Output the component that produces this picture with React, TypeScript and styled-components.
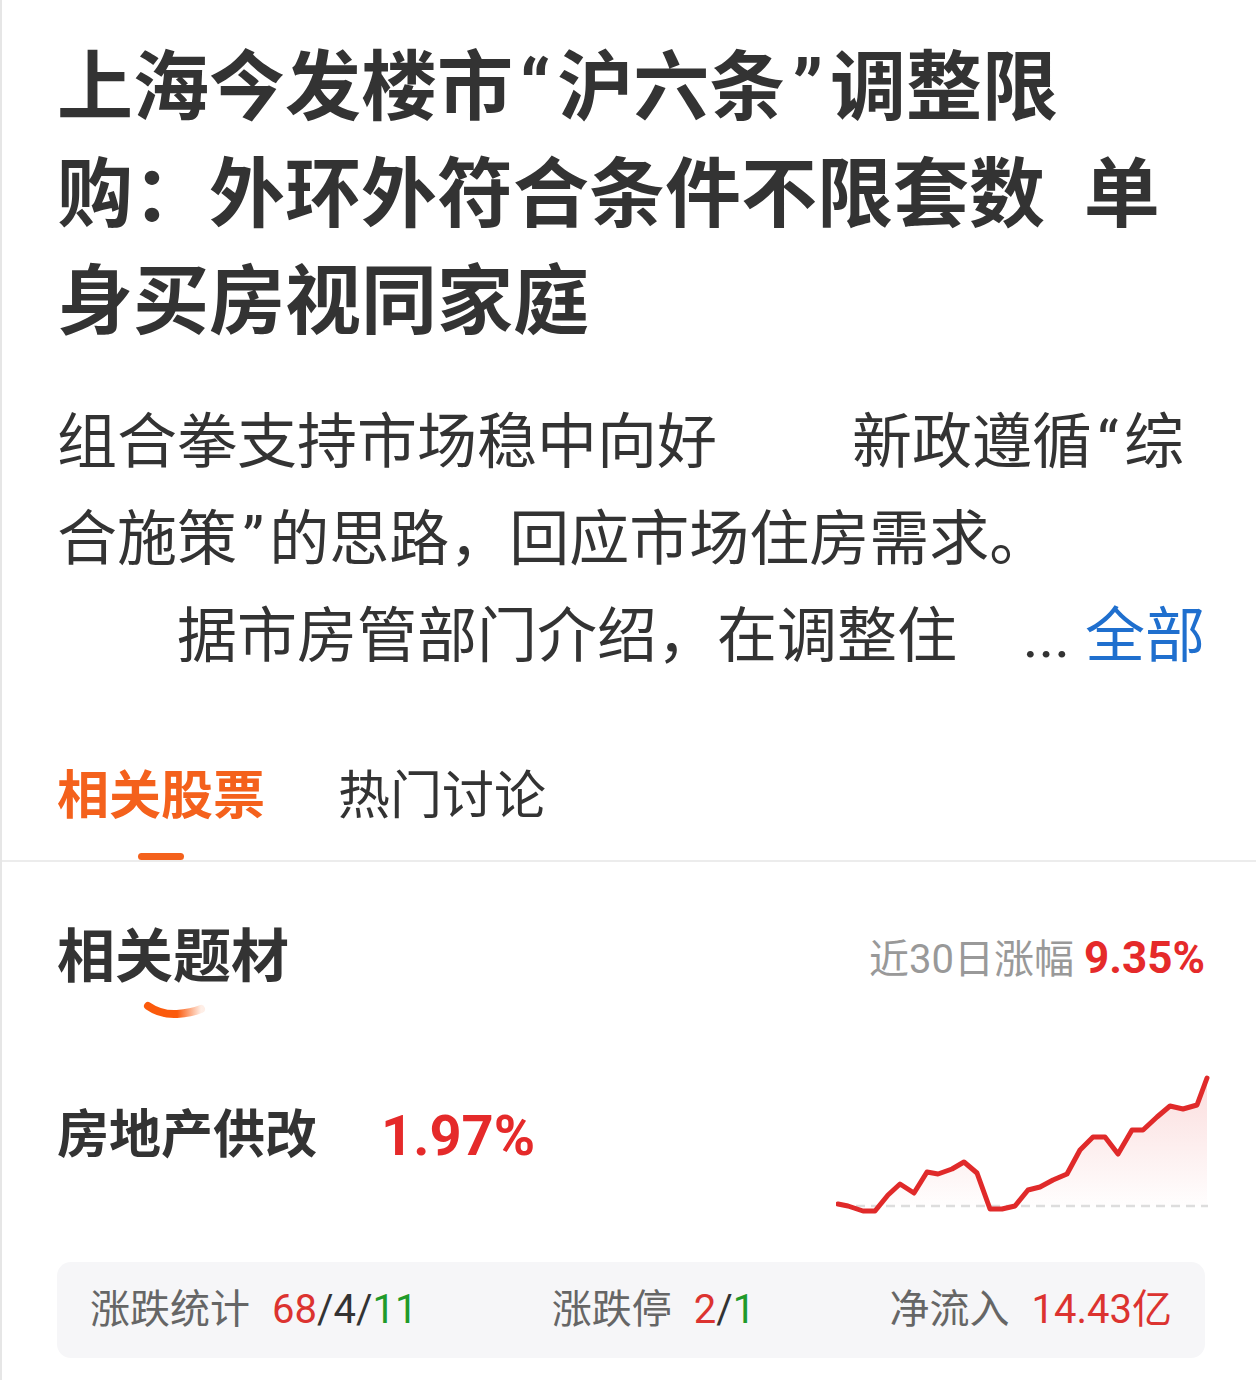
import React from 'react'
import styled, { createGlobalStyle } from 'styled-components'

const GlobalStyle = createGlobalStyle`
  html, body {
    margin: 0;
    padding: 0;
    background: #ffffff;
  }
  body {
    font-family: Roboto, "Noto Sans CJK SC", sans-serif;
    color: #333333;
  }
`

const points: [number, number][] = [
  [2, 130], [12, 132], [27, 137], [39, 137], [52, 121], [64, 110], [78, 119],
  [91, 98], [102, 100], [116, 95], [128, 88], [141, 99], [154, 135], [166, 135],
  [179, 132], [192, 116], [204, 113], [217, 106], [231, 100], [244, 76], [257, 63],
  [269, 63], [282, 80], [296, 56], [307, 56], [321, 43], [334, 32], [347, 35],
  [361, 31], [371, 4],
]

const stats = [
  {
    label: '涨跌统计',
    parts: [
      { text: '68', tone: 'up' },
      { text: '/4/', tone: 'flat' },
      { text: '11', tone: 'down' },
    ],
  },
  {
    label: '涨跌停',
    parts: [
      { text: '2', tone: 'up' },
      { text: '/', tone: 'flat' },
      { text: '1', tone: 'down' },
    ],
  },
  {
    label: '净流入',
    parts: [{ text: '14.43亿', tone: 'up' }],
  },
]

function Sparkline() {
  const line = points.map(([x, y], i) => `${i === 0 ? 'M' : 'L'}${x} ${y}`).join(' ')
  const last = points[points.length - 1]
  const area = `${line} L${last[0]} 132 L${points[0][0]} 132 Z`
  return (
    <Chart width="374" height="142" viewBox="0 0 374 142">
      <defs>
        <linearGradient id="fill" x1="0" y1="0" x2="0" y2="1">
          <stop offset="0" stopColor="#e52a2a" stopOpacity="0.16" />
          <stop offset="1" stopColor="#e52a2a" stopOpacity="0" />
        </linearGradient>
      </defs>
      <path d={area} fill="url(#fill)" />
      <line x1="20" y1="132" x2="372" y2="132" stroke="#dddddd" strokeWidth="2.5" strokeDasharray="9 6" />
      <path d={line} fill="none" stroke="#e02a2a" strokeWidth="5" strokeLinejoin="round" strokeLinecap="round" />
    </Chart>
  )
}

function Swoosh() {
  return (
    <SwooshMark width="64" height="22" viewBox="0 0 64 22">
      <defs>
        <linearGradient id="swoosh" x1="0" y1="0" x2="1" y2="0">
          <stop offset="0" stopColor="#fb5a0c" />
          <stop offset="0.55" stopColor="#fb5a0c" />
          <stop offset="1" stopColor="#fb5a0c" stopOpacity="0.1" />
        </linearGradient>
      </defs>
      <path d="M5 6 Q 18 15 34 14 Q 48 13 58 9" fill="none" stroke="url(#swoosh)" strokeWidth="8" strokeLinecap="round" />
    </SwooshMark>
  )
}

export default function App() {
  return (
    <Page>
      <GlobalStyle />
      <Article>
        <Headline>
          <HeadLine>
            上海今发楼市<Quote>“</Quote>沪六条<Quote>”</Quote>调整限
          </HeadLine>
          <HeadLine>购：外环外符合条件不限套数{'\u2002'}单</HeadLine>
          <HeadLine>身买房视同家庭</HeadLine>
        </Headline>
        <Summary>
          <SummaryLine>
            组合拳支持市场稳中向好 　　新政遵循<Quote>“</Quote>综
          </SummaryLine>
          <SummaryLine>
            合施策<Quote>”</Quote>的思路，回应市场住房需求。
          </SummaryLine>
          <SummaryLine>
            <span>　　据市房管部门介绍，在调整住</span>
            <More>
              ... <MoreLink>全部</MoreLink>
            </More>
          </SummaryLine>
        </Summary>
      </Article>

      <TabBar>
        <Tab $active>
          <TabLabel $active>相关股票</TabLabel>
          <TabIndicator $active />
        </Tab>
        <Tab>
          <TabLabel>热门讨论</TabLabel>
          <TabIndicator />
        </Tab>
      </TabBar>

      <Topics>
        <TopicHeader>
          <TopicTitleBlock>
            <TopicTitle>相关题材</TopicTitle>
            <Swoosh />
          </TopicTitleBlock>
          <Gain>
            近30日涨幅 <GainValue>9.35%</GainValue>
          </Gain>
        </TopicHeader>

        <TopicRow>
          <TopicInfo>
            <TopicName>房地产供改</TopicName>
            <TopicChange>1.97%</TopicChange>
          </TopicInfo>
          <Sparkline />
        </TopicRow>

        <StatsBox>
          {stats.map((s) => (
            <Stat key={s.label}>
              <StatLabel>{s.label}</StatLabel>
              <StatValue>
                {s.parts.map((p, i) => (
                  <Tone key={i} $tone={p.tone}>
                    {p.text}
                  </Tone>
                ))}
              </StatValue>
            </Stat>
          ))}
        </StatsBox>
      </Topics>
    </Page>
  )
}

const Page = styled.div`
  width: 1256px;
  min-height: 1380px;
  box-sizing: border-box;
  border-left: 2px solid #e6e6e6;
  background: #ffffff;
  padding-top: 35px;
  overflow: hidden;
`

const Article = styled.div`
  padding: 0 51px 0 55px;
`

const Headline = styled.h1`
  margin: 0;
  font-size: 76px;
  line-height: 107px;
  font-weight: 700;
  color: #333333;
`

const HeadLine = styled.span`
  display: block;
  white-space: pre;
`

const Quote = styled.span`
  padding: 0 0.09em;
`

const Summary = styled.div`
  margin-top: 38px;
  font-size: 60px;
  line-height: 97px;
  color: #333333;
`

const SummaryLine = styled.div`
  display: flex;
  white-space: pre;
`

const More = styled.span`
  margin-left: auto;
  color: #333333;
`

const MoreLink = styled.span`
  color: #1f6fce;
`

const TabBar = styled.div`
  margin-top: 82px;
  display: flex;
  gap: 73px;
  padding-left: 55px;
  border-bottom: 2px solid #ececec;
`

const Tab = styled.div<{ $active?: boolean }>`
  display: flex;
  flex-direction: column;
  align-items: center;
  gap: 26px;
`

const TabLabel = styled.span<{ $active?: boolean }>`
  font-size: 52px;
  line-height: 60px;
  font-weight: ${(p) => (p.$active ? 700 : 400)};
  color: ${(p) => (p.$active ? '#f4611c' : '#333333')};
`

const TabIndicator = styled.span<{ $active?: boolean }>`
  width: 46px;
  height: 7px;
  border-radius: 4px;
  background: ${(p) => (p.$active ? '#f4611c' : 'transparent')};
`

const Topics = styled.div`
  padding: 0 51px 0 55px;
`

const TopicHeader = styled.div`
  margin-top: 62px;
  display: flex;
  justify-content: space-between;
  align-items: flex-start;
`

const TopicTitleBlock = styled.div`
  display: flex;
  flex-direction: column;
`

const TopicTitle = styled.h2`
  margin: 0;
  font-size: 58px;
  line-height: 66px;
  font-weight: 700;
  color: #333333;
`

const SwooshMark = styled.svg`
  display: block;
  margin: 10px 0 0 86px;
`

const Gain = styled.div`
  margin-top: 9px;
  font-size: 40px;
  line-height: 50px;
  color: #999999;
  white-space: pre;
`

const GainValue = styled.span`
  font-size: 44px;
  font-weight: 700;
  color: #e52a2a;
`

const TopicRow = styled.div`
  margin-top: 52px;
  display: flex;
  justify-content: space-between;
  align-items: flex-start;
`

const TopicInfo = styled.div`
  margin-top: 32px;
  display: flex;
  align-items: center;
  gap: 64px;
`

const TopicName = styled.span`
  font-size: 52px;
  line-height: 60px;
  font-weight: 700;
  color: #333333;
`

const TopicChange = styled.span`
  font-size: 56px;
  line-height: 60px;
  font-weight: 700;
  color: #e52a2a;
`

const Chart = styled.svg`
  display: block;
  margin-right: -5px;
`

const StatsBox = styled.div`
  margin-top: 46px;
  height: 96px;
  border-radius: 14px;
  background: #f6f6f8;
  padding: 0 33px;
  display: flex;
  align-items: center;
  justify-content: space-between;
`

const Stat = styled.div`
  display: flex;
  align-items: baseline;
  gap: 22px;
  font-size: 40px;
  line-height: 50px;
`

const StatLabel = styled.span`
  color: #666666;
`

const StatValue = styled.span`
  display: flex;
`

const Tone = styled.span<{ $tone: string }>`
  color: ${(p) => (p.$tone === 'up' ? '#dc3330' : p.$tone === 'down' ? '#1f9a2a' : '#333333')};
`
